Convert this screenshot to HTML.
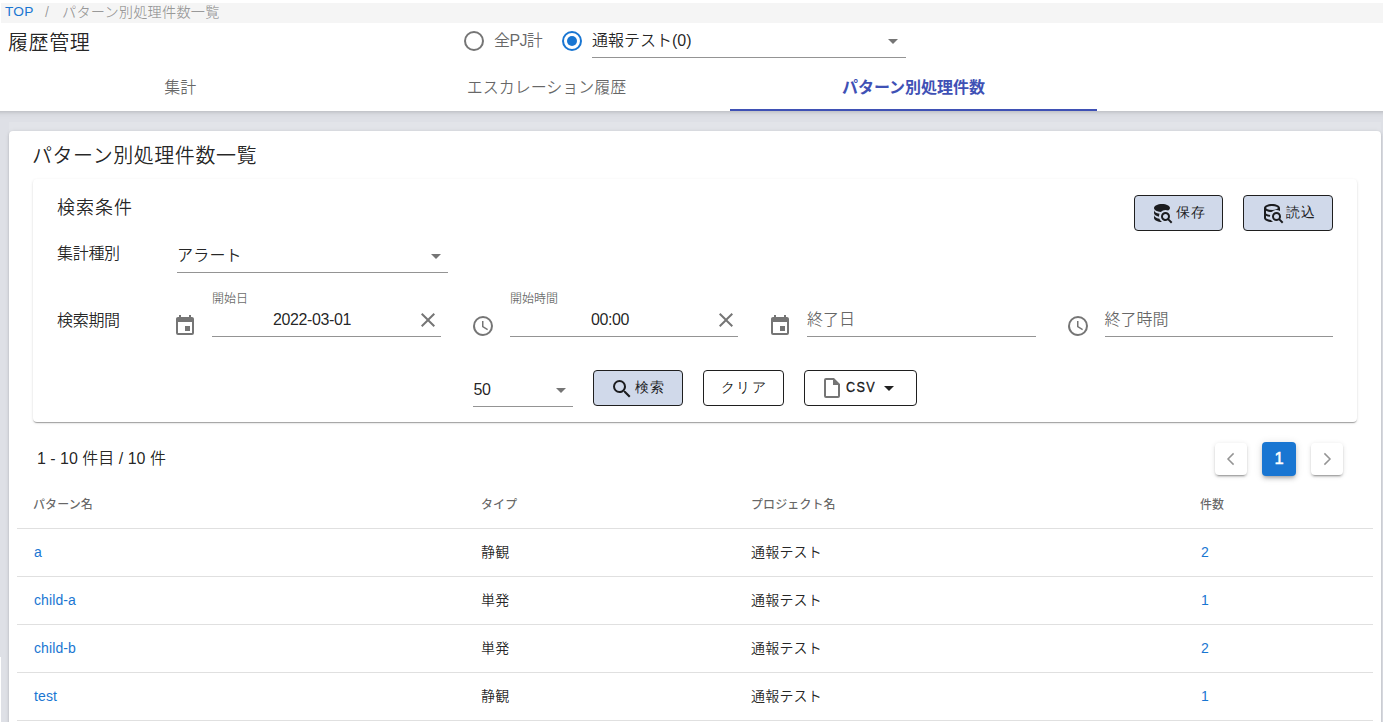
<!DOCTYPE html>
<html lang="ja">
<head>
<meta charset="utf-8">
<title>パターン別処理件数一覧</title>
<style>
*{box-sizing:border-box;margin:0;padding:0}
html,body{width:1383px;height:722px;overflow:hidden}
body{position:relative;background:#dee0e6;color:rgba(0,0,0,.87);
  font-family:"Liberation Sans","Noto Sans CJK JP",sans-serif;font-size:16px;font-weight:350}
a{text-decoration:none;color:#1976d2}
.abs{position:absolute;white-space:nowrap}
svg{display:block}

/* ---------- header ---------- */
.appbar{position:absolute;left:0;top:0;width:1383px;height:111px;background:#fff}
.appbar::before{content:"";position:absolute;left:-20px;top:0;width:1423px;height:111px;background:#fff;
  box-shadow:0 1px 3px rgba(0,0,0,.12),0 3px 6px rgba(0,0,0,.06)}
.band{position:absolute;left:9px;top:122px;width:1372px;height:12px;background:rgba(255,255,255,.13)}
.sliver{position:absolute;left:0;top:657px;width:1px;height:65px;background:#fff}
.crumbs{position:absolute;left:1px;top:3px;width:1382px;height:19.6px;background:#f5f5f5;
  font-size:14.2px;line-height:20px;color:rgba(0,0,0,.38);letter-spacing:.2px}
.crumbs span,.crumbs a{position:absolute;top:-1.5px;white-space:nowrap}
.title{left:8px;top:28px;font-size:20px;line-height:30px;font-weight:350;letter-spacing:.6px}
.radio{width:20px;height:20px;border-radius:50%;border:2px solid rgba(0,0,0,.54)}
.radio.on{border-color:#1976d2}
.radio.on::after{content:"";position:absolute;left:3px;top:3px;width:10px;height:10px;border-radius:50%;background:#1976d2}
.line{position:absolute;height:1px;background:rgba(0,0,0,.42)}
.caret{position:absolute;width:0;height:0;border-left:5px solid transparent;border-right:5px solid transparent;border-top:5px solid rgba(0,0,0,.54)}
.tab{top:73.2px;height:30px;line-height:30px;font-size:16px;color:rgba(0,0,0,.6);text-align:center}
.tab.active{color:#3f51b5;font-weight:700}
.slider{position:absolute;left:730px;top:109px;width:367px;height:2px;background:#3f51b5}

/* ---------- main card ---------- */
.card{position:absolute;left:9px;top:131px;width:1372px;height:640px;background:#fff;border-radius:4px;
  box-shadow:0 2px 1px -1px rgba(0,0,0,.2),0 1px 1px 0 rgba(0,0,0,.14),0 1px 3px 0 rgba(0,0,0,.12),0 0 5px rgba(0,0,0,.06)}
.h2{left:23px;top:9.5px;font-size:20px;line-height:30px;font-weight:350;letter-spacing:.55px}
.search{position:absolute;left:24px;top:48px;width:1324px;height:243px;background:#fff;border-radius:4px;
  box-shadow:0 2px 1px -1px rgba(0,0,0,.2),0 1px 1px 0 rgba(0,0,0,.14),0 1px 3px 0 rgba(0,0,0,.12)}
.lbl{font-size:16px;line-height:24px}
.small{font-size:12px;line-height:16px;color:rgba(0,0,0,.6)}
.ph{font-size:16px;line-height:24px;color:rgba(0,0,0,.6)}
.val{font-size:16px;line-height:24px;letter-spacing:-.4px}
.ico{position:absolute;width:24px;height:24px;fill:rgba(0,0,0,.54)}
.btn{position:absolute;height:36px;border:1px solid #1f1f1f;border-radius:4px;background:#fff;
  font-size:14px;font-weight:500;letter-spacing:1.25px;color:rgba(0,0,0,.87)}
.btn.tint{background:#d0d9ea}
.btn .t{position:absolute;top:4.2px;line-height:24px;white-space:nowrap}
.btn svg{position:absolute;width:24px;height:24px;fill:rgba(0,0,0,.87)}

/* ---------- table ---------- */
.count{left:28px;top:316px;font-size:16px;line-height:24px}
.pg{position:absolute;width:32px;height:32px;border-radius:4px;background:#fff;
  box-shadow:0 3px 1px -2px rgba(0,0,0,.2),0 2px 2px 0 rgba(0,0,0,.14),0 1px 5px 0 rgba(0,0,0,.12)}
.pg svg{position:absolute;left:4px;top:4px;width:24px;height:24px;fill:none;stroke:rgba(0,0,0,.42);stroke-width:1.5}
.pg.cur{width:34px;height:34px;background:#1976d2;color:#fff;font-size:16.5px;font-weight:400;-webkit-text-stroke:.5px #fff;text-align:center;line-height:33px;
  box-shadow:0 3px 3px -2px rgba(0,0,0,.2),0 3px 4px 0 rgba(0,0,0,.14),0 1px 8px 0 rgba(0,0,0,.12)}
table{position:absolute;left:8px;top:349px;width:1356px;border-collapse:collapse;table-layout:fixed}
th,td{height:48px;padding:0 16px;text-align:left;border-bottom:1px solid rgba(0,0,0,.12);white-space:nowrap}
th{font-size:12px;font-weight:500;color:rgba(0,0,0,.6);padding-bottom:1px;letter-spacing:.1px}
td{font-size:14px}
td.j{padding-bottom:2px;letter-spacing:.2px}
td a{padding-left:1px;letter-spacing:.1px}
</style>
</head>
<body>

<header class="appbar">
  <nav class="crumbs">
    <a href="#" style="left:4px;font-size:13.7px">TOP</a>
    <span style="left:44px">/</span>
    <span style="left:61px">パターン別処理件数一覧</span>
  </nav>
  <h1 class="abs title">履歴管理</h1>

  <div class="abs radio" style="left:464px;top:31px"></div>
  <label class="abs lbl" style="left:494px;top:29px;color:rgba(0,0,0,.6);letter-spacing:-.6px">全PJ計</label>
  <div class="abs radio on" style="left:562px;top:31px"></div>
  <div class="abs lbl" style="left:592px;top:29px">通報テスト(0)</div>
  <div class="caret" style="left:888px;top:39px"></div>
  <div class="line" style="left:592px;top:57px;width:314px"></div>

  <div class="abs tab" style="left:0;width:360.5px">集計</div>
  <div class="abs tab" style="left:363px;width:367px">エスカレーション履歴</div>
  <div class="abs tab active" style="left:730px;width:367px">パターン別処理件数</div>
  <div class="slider"></div>
</header>

<div class="band"></div>
<div class="sliver"></div>
<main class="card">
  <h2 class="abs h2">パターン別処理件数一覧</h2>

  <section class="search">
    <h3 class="abs" style="left:24px;top:16px;font-size:18px;line-height:26px;font-weight:350;letter-spacing:1px">検索条件</h3>

    <button class="btn tint" style="left:1101px;top:16px;width:89px">
      <svg viewBox="0 0 24 24" style="left:15px;top:5px"><path d="M18.68,12.32C16.92,10.56 14.07,10.57 12.32,12.33C10.56,14.09 10.56,16.94 12.32,18.69C13.81,20.17 16.11,20.43 17.89,19.32L21,22.39L22.39,21L19.3,17.89C20.43,16.12 20.17,13.8 18.68,12.32M17.27,17.27C16.29,18.25 14.71,18.24 13.73,17.27C12.76,16.29 12.75,14.71 13.73,13.73C14.71,12.76 16.29,12.75 17.27,13.73C18.24,14.71 18.24,16.29 17.27,17.27M10.9,20.1C10.25,19.44 9.74,18.65 9.42,17.78C6.27,17.25 4,15.76 4,14V17C4,19.21 7.58,21 12,21V21C11.59,20.74 11.22,20.44 10.9,20.1M4,9V12C4,13.68 6.07,15.12 9,15.7C9,15.63 9,15.57 9,15.5C9,14.57 9.2,13.65 9.58,12.81C6.34,12.3 4,10.79 4,9M12,3C7.58,3 4,4.79 4,7C4,9 7,10.68 10.85,11H10.9C12.1,9.74 13.76,9 15.5,9C16.41,9 17.31,9.19 18.14,9.56C19.17,9.09 19.87,8.12 20,7C20,4.79 16.42,3 12,3Z"/></svg>
      <span class="t" style="left:41px;letter-spacing:.9px">保存</span>
    </button>
    <button class="btn tint" style="left:1210px;top:16px;width:90px">
      <svg viewBox="0 0 24 24" style="left:16px;top:5px"><path d="M11,18.95C7.77,18.72 6,17.45 6,17V14.77C7.13,15.32 8.5,15.69 10,15.87C10,15.21 10.04,14.54 10.21,13.89C8.5,13.67 6.97,13.16 6,12.45V9.64C7.43,10.45 9.5,10.97 11.82,11C11.85,10.97 11.87,10.93 11.9,10.9C14.1,8.71 17.5,8.41 20,10.03V7C20,4.79 16.42,3 12,3C7.58,3 4,4.79 4,7V17C4,19.21 7.59,21 12,21C12.34,21 12.68,21 13,20.97C12.62,20.72 12.24,20.44 11.9,20.1C11.55,19.74 11.25,19.36 11,18.95M12,5C15.87,5 18,6.5 18,7C18,7.5 15.87,9 12,9C8.13,9 6,7.5 6,7C6,6.5 8.13,5 12,5M20.31,17.9C20.75,17.21 21,16.38 21,15.5A4.5,4.5 0 0,0 16.5,11A4.5,4.5 0 0,0 12,15.5A4.5,4.5 0 0,0 16.5,20C17.37,20 18.19,19.75 18.88,19.32L22,22.39L23.39,21L20.31,17.9M16.5,18A2.5,2.5 0 0,1 14,15.5A2.5,2.5 0 0,1 16.5,13A2.5,2.5 0 0,1 19,15.5A2.5,2.5 0 0,1 16.5,18Z"/></svg>
      <span class="t" style="left:42px">読込</span>
    </button>

    <label class="abs lbl" style="left:24px;top:62.8px;letter-spacing:-.3px">集計種別</label>
    <div class="abs lbl" style="left:144px;top:65px;letter-spacing:.2px">アラート</div>
    <div class="caret" style="left:398px;top:75px"></div>
    <div class="line" style="left:144px;top:93px;width:271px"></div>

    <label class="abs lbl" style="left:24px;top:129.8px;letter-spacing:-.3px">検索期間</label>

    <svg class="ico" viewBox="0 0 24 24" style="left:140px;top:135px"><path d="M19,19H5V8H19M16,1V3H8V1H6V3H5C3.89,3 3,3.89 3,5V19A2,2 0 0,0 5,21H19A2,2 0 0,0 21,19V5C21,3.89 20.1,3 19,3H18V1M17,12H12V17H17V12Z"/></svg>
    <div class="abs small" style="left:179px;top:112px">開始日</div>
    <div class="abs val" style="left:177px;top:129px;width:204px;text-align:center">2022-03-01</div>
    <svg class="ico" viewBox="0 0 24 24" style="left:383px;top:129px"><path d="M19,6.41L17.59,5L12,10.59L6.41,5L5,6.41L10.59,12L5,17.59L6.41,19L12,13.41L17.59,19L19,17.59L13.41,12L19,6.41Z"/></svg>
    <div class="line" style="left:179px;top:157px;width:229px"></div>

    <svg class="ico" viewBox="0 0 24 24" style="left:437.5px;top:135px"><path d="M12,20A8,8 0 0,0 20,12A8,8 0 0,0 12,4A8,8 0 0,0 4,12A8,8 0 0,0 12,20M12,2A10,10 0 0,1 22,12A10,10 0 0,1 12,22C6.47,22 2,17.5 2,12A10,10 0 0,1 12,2M12.5,7V12.25L17,14.92L16.25,16.15L11,13V7H12.5Z"/></svg>
    <div class="abs small" style="left:477px;top:112px">開始時間</div>
    <div class="abs val" style="left:475px;top:129px;width:204px;text-align:center">00:00</div>
    <svg class="ico" viewBox="0 0 24 24" style="left:681px;top:129px"><path d="M19,6.41L17.59,5L12,10.59L6.41,5L5,6.41L10.59,12L5,17.59L6.41,19L12,13.41L17.59,19L19,17.59L13.41,12L19,6.41Z"/></svg>
    <div class="line" style="left:477px;top:157px;width:228px"></div>

    <svg class="ico" viewBox="0 0 24 24" style="left:735px;top:135px"><path d="M19,19H5V8H19M16,1V3H8V1H6V3H5C3.89,3 3,3.89 3,5V19A2,2 0 0,0 5,21H19A2,2 0 0,0 21,19V5C21,3.89 20.1,3 19,3H18V1M17,12H12V17H17V12Z"/></svg>
    <div class="abs ph" style="left:774px;top:129px">終了日</div>
    <div class="line" style="left:774px;top:157px;width:229px"></div>

    <svg class="ico" viewBox="0 0 24 24" style="left:1032.5px;top:135px"><path d="M12,20A8,8 0 0,0 20,12A8,8 0 0,0 12,4A8,8 0 0,0 4,12A8,8 0 0,0 12,20M12,2A10,10 0 0,1 22,12A10,10 0 0,1 12,22C6.47,22 2,17.5 2,12A10,10 0 0,1 12,2M12.5,7V12.25L17,14.92L16.25,16.15L11,13V7H12.5Z"/></svg>
    <div class="abs ph" style="left:1071.5px;top:129px">終了時間</div>
    <div class="line" style="left:1072px;top:157px;width:228px"></div>

    <div class="abs val" style="left:440.5px;top:198.75px">50</div>
    <div class="caret" style="left:523px;top:209px"></div>
    <div class="line" style="left:440px;top:227px;width:100px"></div>

    <button class="btn tint" style="left:560px;top:191px;width:90px">
      <svg viewBox="0 0 24 24" style="left:16px;top:6px"><path d="M9.5,3A6.5,6.5 0 0,1 16,9.5C16,11.11 15.41,12.59 14.44,13.73L14.71,14H15.5L20.5,19L19,20.5L14,15.5V14.71L13.73,14.44C12.59,15.41 11.11,16 9.5,16A6.5,6.5 0 0,1 3,9.5A6.5,6.5 0 0,1 9.5,3M9.5,5C7,5 5,7 5,9.5C5,12 7,14 9.5,14C12,14 14,12 14,9.5C14,7 12,5 9.5,5Z"/></svg>
      <span class="t" style="left:41px">検索</span>
    </button>
    <button class="btn" style="left:670px;top:191px;width:81px">
      <span class="t" style="left:17px;top:4px;font-weight:400">クリア</span>
    </button>
    <button class="btn" style="left:771px;top:191px;width:113px">
      <svg viewBox="0 0 24 24" style="left:15px;top:5px;fill:rgba(0,0,0,.54)"><path d="M14,2H6A2,2 0 0,0 4,4V20A2,2 0 0,0 6,22H18A2,2 0 0,0 20,20V8L14,2M18,20H6V4H13V9H18V20Z"/></svg>
      <span class="t" style="left:41px;font-weight:400;letter-spacing:1.5px;-webkit-text-stroke:.4px currentColor;transform:scaleX(.9);transform-origin:0 50%">CSV</span>
      <span class="caret" style="left:78.5px;top:15px;border-top-color:rgba(0,0,0,.87)"></span>
    </button>
  </section>

  <div class="abs count">1 - 10 件目 / 10 件</div>

  <div class="pg" style="left:1206px;top:312px"><svg viewBox="0 0 24 24"><polyline points="14.6,6.4 9,12 14.6,17.6"/></svg></div>
  <div class="pg cur" style="left:1253px;top:311px">1</div>
  <div class="pg" style="left:1302px;top:312px"><svg viewBox="0 0 24 24"><polyline points="9.4,6.4 15,12 9.4,17.6"/></svg></div>

  <table>
    <colgroup><col style="width:448px"><col style="width:270px"><col style="width:449px"><col style="width:189px"></colgroup>
    <thead><tr><th>パターン名</th><th>タイプ</th><th>プロジェクト名</th><th>件数</th></tr></thead>
    <tbody>
      <tr><td><a href="#">a</a></td><td class="j">静観</td><td class="j">通報テスト</td><td><a href="#">2</a></td></tr>
      <tr><td><a href="#">child-a</a></td><td class="j">単発</td><td class="j">通報テスト</td><td><a href="#">1</a></td></tr>
      <tr><td><a href="#">child-b</a></td><td class="j">単発</td><td class="j">通報テスト</td><td><a href="#">2</a></td></tr>
      <tr><td><a href="#">test</a></td><td class="j">静観</td><td class="j">通報テスト</td><td><a href="#">1</a></td></tr>
      <tr><td><a href="#">test2</a></td><td class="j">単発</td><td class="j">通報テスト</td><td><a href="#">1</a></td></tr>
    </tbody>
  </table>
</main>

</body>
</html>
